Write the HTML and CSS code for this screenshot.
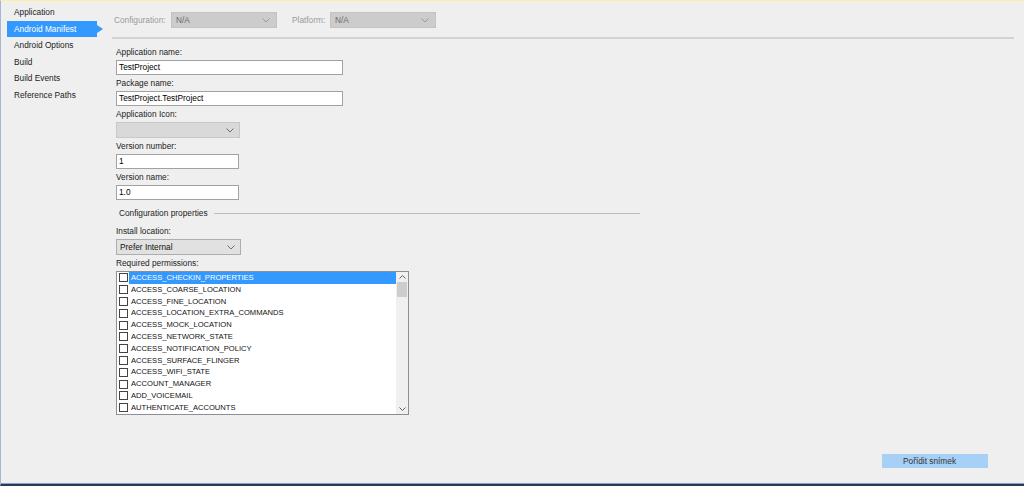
FILE: index.html
```html
<!DOCTYPE html>
<html lang="en">
<head>
    <meta charset="UTF-8">
    <title>Android Manifest</title>
    <link rel="stylesheet" href="styles.css">
</head>
<body>
    <div class="window">
        <nav class="sidebar">
            <div class="nav-item">Application</div>
            <div class="nav-item active">Android Manifest</div>
            <div class="nav-item">Android Options</div>
            <div class="nav-item">Build</div>
            <div class="nav-item">Build Events</div>
            <div class="nav-item">Reference Paths</div>
        </nav>

        <main class="content">
            <div class="toolbar">
                <span class="tb-label conf">Configuration:</span>
                <div class="combo locked">
                    <span>N/A</span>
                    <svg width="8" height="5" viewBox="0 0 8 5"><polyline points="0.5,0.5 4,4 7.5,0.5" fill="none" stroke="#9a9a9a" stroke-width="1"/></svg>
                </div>
                <span class="tb-label plat">Platform:</span>
                <div class="combo locked">
                    <span>N/A</span>
                    <svg width="8" height="5" viewBox="0 0 8 5"><polyline points="0.5,0.5 4,4 7.5,0.5" fill="none" stroke="#9a9a9a" stroke-width="1"/></svg>
                </div>
            </div>

            <div class="form">
                <div class="field">
                    <label>Application name:</label>
                    <div class="textbox wide">TestProject</div>
                </div>
                <div class="field">
                    <label>Package name:</label>
                    <div class="textbox wide">TestProject.TestProject</div>
                </div>
                <div class="field">
                    <label>Application Icon:</label>
                    <div class="select off">
                        <span></span>
                        <svg width="8" height="5" viewBox="0 0 8 5"><polyline points="0.5,0.5 4,4 7.5,0.5" fill="none" stroke="#707070" stroke-width="1"/></svg>
                    </div>
                </div>
                <div class="field">
                    <label>Version number:</label>
                    <div class="textbox short">1</div>
                </div>
                <div class="field">
                    <label>Version name:</label>
                    <div class="textbox short">1.0</div>
                </div>

                <div class="group-header"><span>Configuration properties</span></div>

                <div class="field">
                    <label>Install location:</label>
                    <div class="select">
                        <span>Prefer Internal</span>
                        <svg width="8" height="5" viewBox="0 0 8 5"><polyline points="0.5,0.5 4,4 7.5,0.5" fill="none" stroke="#707070" stroke-width="1"/></svg>
                    </div>
                </div>
                <div class="field">
                    <label>Required permissions:</label>
                    <div class="listbox">
                        <div class="items" id="perms"></div>
                        <div class="scrollbar">
                            <div class="sb-arrow">
                                <svg width="7" height="4" viewBox="0 0 7 4"><polyline points="0.5,3.5 3.5,0.5 6.5,3.5" fill="none" stroke="#606060" stroke-width="1"/></svg>
                            </div>
                            <div class="sb-thumb"></div>
                            <div class="sb-arrow down">
                                <svg width="7" height="4" viewBox="0 0 7 4"><polyline points="0.5,0.5 3.5,3.5 6.5,0.5" fill="none" stroke="#606060" stroke-width="1"/></svg>
                            </div>
                        </div>
                    </div>
                </div>
            </div>

            <div class="footer">
                <button class="snap">Pořídit snímek</button>
            </div>
        </main>
    </div>

    <script>
        const permissions = [
            'ACCESS_CHECKIN_PROPERTIES',
            'ACCESS_COARSE_LOCATION',
            'ACCESS_FINE_LOCATION',
            'ACCESS_LOCATION_EXTRA_COMMANDS',
            'ACCESS_MOCK_LOCATION',
            'ACCESS_NETWORK_STATE',
            'ACCESS_NOTIFICATION_POLICY',
            'ACCESS_SURFACE_FLINGER',
            'ACCESS_WIFI_STATE',
            'ACCOUNT_MANAGER',
            'ADD_VOICEMAIL',
            'AUTHENTICATE_ACCOUNTS'
        ];

        const list = document.getElementById('perms');
        permissions.forEach((name, i) => {
            const row = document.createElement('div');
            row.classList.add('perm');
            if (i === 0) row.classList.add('selected');
            row.innerHTML = `<span class="check"></span><span class="perm-name">${name}</span>`;
            list.appendChild(row);
        });
    </script>
</body>
</html>
```

FILE: styles.css
```css
* {
    box-sizing: border-box;
}
body {
    margin: 0;
    background-color: #f0f0f0;
    font-family: "Liberation Sans", Arial, sans-serif;
    font-size: 8.3px;
    color: #1b1b1b;
}
.window {
    width: 1024px;
    height: 486px;
    display: flex;
    background-color: #efefef;
    border-top: 1px solid #fcef9c;
    border-left: 1px solid #a8b6d2;
    border-bottom: 2px solid #2c3a57;
    box-shadow: inset 0 -1px 0 #8e9ebf;
}
.sidebar {
    width: 104px;
    padding-top: 3px;
    flex-shrink: 0;
}
.nav-item {
    height: 16.6px;
    line-height: 16.6px;
    padding-left: 13px;
    white-space: nowrap;
}
.nav-item.active {
    position: relative;
    margin-left: 6px;
    width: 90px;
    padding-left: 7px;
    background-color: #3399ff;
    color: #fff;
}
.nav-item.active::after {
    content: "";
    position: absolute;
    right: -6px;
    top: 4px;
    border-left: 6px solid #3399ff;
    border-top: 4px solid transparent;
    border-bottom: 4px solid transparent;
}
.content {
    flex: 1;
    display: flex;
    flex-direction: column;
    padding-left: 7px;
}
.toolbar {
    display: flex;
    align-items: center;
    height: 38px;
    padding: 11px 0 9px 2px;
    margin-right: 10px;
    border-bottom: 2px solid #d2d2d2;
}
.tb-label {
    color: #9a9a9a;
}
.tb-label.conf {
    width: 57px;
}
.tb-label.plat {
    width: 38px;
    margin-left: 15px;
}
.combo {
    width: 106px;
    height: 16px;
    display: flex;
    align-items: center;
    justify-content: space-between;
    padding: 0 6px 0 4px;
    border: 1px solid #c4c4c4;
    background-color: #cccccc;
    color: #6a6a6a;
}
.form {
    padding: 7px 0 0 4px;
}
.field {
    margin-bottom: 2px;
}
.field label {
    display: block;
    height: 12px;
    line-height: 12px;
    margin-bottom: 2px;
}
.textbox {
    height: 15px;
    line-height: 13px;
    padding-left: 2px;
    border: 1px solid #a2a2a2;
    background-color: #fff;
    color: #000;
}
.textbox.wide {
    width: 227px;
}
.textbox.short {
    width: 123px;
}
.select {
    width: 125px;
    height: 16px;
    display: flex;
    align-items: center;
    justify-content: space-between;
    padding: 0 5px 0 3px;
    border: 1px solid #adadad;
    background-color: #e1e1e1;
    color: #111;
}
.select.off {
    width: 124px;
    border-color: #c8c8c8;
    background-color: #d9d9d9;
}
.group-header {
    display: flex;
    align-items: center;
    width: 524px;
    height: 12px;
    margin: 7px 0 6px;
    padding-left: 3px;
}
.group-header::after {
    content: "";
    flex: 1;
    height: 1px;
    margin-left: 6px;
    background-color: #bdbdbd;
}
.listbox {
    width: 293px;
    height: 144px;
    display: flex;
    border: 1px solid #8a8f97;
    background-color: #fff;
}
.items {
    flex: 1;
    overflow: hidden;
}
.perm {
    display: flex;
    align-items: center;
    height: 11.8px;
    font-size: 7.6px;
    color: #111;
}
.check {
    width: 9px;
    height: 9px;
    margin: 0 1px 0 2px;
    border: 1px solid #444;
    background-color: #fff;
    flex-shrink: 0;
}
.perm-name {
    flex: 1;
    height: 100%;
    line-height: 11.8px;
    padding-left: 2px;
    white-space: nowrap;
}
.perm.selected .perm-name {
    background-color: #3399ff;
    color: #fff;
}
.scrollbar {
    width: 12px;
    display: flex;
    flex-direction: column;
    background-color: #f0f0f0;
}
.sb-arrow {
    height: 10px;
    display: flex;
    align-items: center;
    justify-content: center;
}
.sb-arrow.down {
    margin-top: auto;
}
.sb-thumb {
    height: 15px;
    margin: 0 1px;
    background-color: #cdcdcd;
}
.footer {
    margin-top: auto;
    display: flex;
    justify-content: flex-end;
    padding: 0 36px 16px 0;
}
.snap {
    width: 106px;
    height: 14px;
    padding: 0 0 0 21px;
    text-align: left;
    border: none;
    background-color: #a6d0f6;
    color: #333;
    font-family: "Liberation Sans", Arial, sans-serif;
    font-size: 8.3px;
}
```
